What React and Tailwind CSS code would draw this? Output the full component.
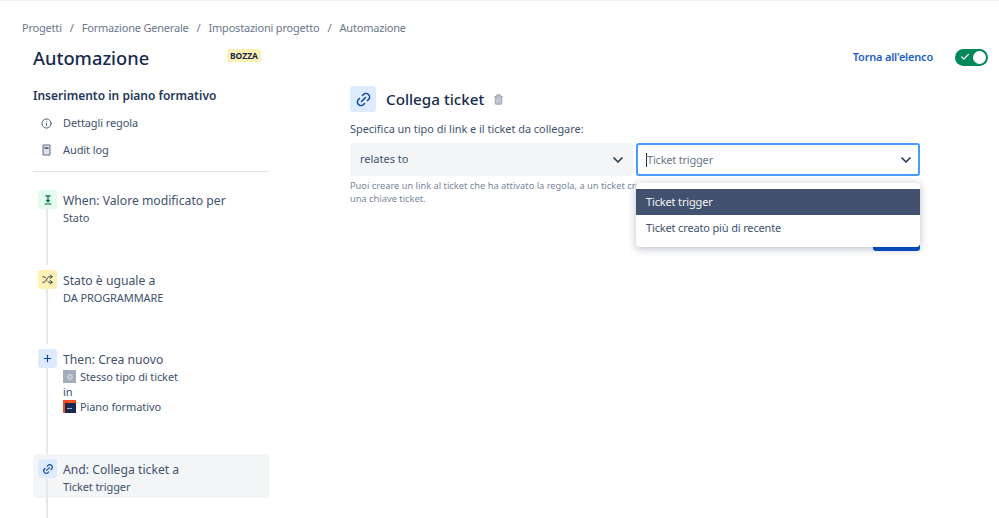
import { Info, Shuffle, Plus, Link2, ChevronDown, Check, Trash2 } from 'lucide-react';

const crumbs = ['Progetti', 'Formazione Generale', 'Impostazioni progetto', 'Automazione'];

function TicketIcon() {
  return (
    <span className="w-[13px] h-[13px] bg-[#a5adba] flex items-center justify-center shrink-0">
      <span className="w-[6px] h-[6px] rounded-full border-2 border-[#c8ced8]" />
    </span>
  );
}

function PlanIcon() {
  return (
    <span className="w-[13px] h-[13px] bg-[#ff4b22] flex items-end justify-end shrink-0">
      <span className="w-[11px] h-[10px] bg-[#172b4d] flex items-center pl-[2px]">
        <span className="w-[5px] h-[1px] bg-[#8fb4e0]" />
      </span>
    </span>
  );
}

function ValueIcon() {
  return (
    <svg width="10" height="10" viewBox="0 0 10 10" className="text-[#006644]" fill="none" stroke="currentColor" strokeWidth="1.2">
      <path d="M2.5 0.8h5M5 1v5.5M3.2 4.8 5 6.8l1.8-2M1.5 9h7" />
    </svg>
  );
}

function Step({ icon, tint, title, selected, height, children }) {
  return (
    <div className={`flex gap-[6px] pl-[5px] pr-2 rounded ${height} ${selected ? 'bg-[#f4f5f7]' : ''}`}>
      <div className="flex flex-col w-[19px] shrink-0">
        <div className={`w-[19px] h-[19px] mt-[5px] rounded-[3px] flex items-center justify-center shrink-0 ${tint}`}>{icon}</div>
        <div className="w-[2px] ml-[8px] flex-1 bg-[#e6e7ef]" />
      </div>
      <div className="pt-[6px] text-[#42526e]">
        <div className="text-[12.2px] leading-[19px]">{title}</div>
        <div className="text-[11px] tracking-[-0.1px] leading-[15px]">{children}</div>
      </div>
    </div>
  );
}

export default function App() {
  return (
    <div className="w-[999px] h-[518px] overflow-hidden bg-white border-t border-[#f1f2f4] font-['Noto_Sans','Open_Sans',sans-serif] text-[#42526e]">
      {/* Breadcrumbs */}
      <div className="flex gap-[8px] pl-[22px] pt-[19px] text-[11px] tracking-[-0.2px] leading-4 text-[#6b778c]">
        {crumbs.map((c, idx) => (
          <div key={c} className="flex gap-[8px]">
            {idx > 0 && <span>/</span>}
            <span>{c}</span>
          </div>
        ))}
      </div>

      {/* Header */}
      <div className="flex items-center justify-between pl-[33px] pr-[11px] mt-[7px] h-[30px]">
        <div className="flex items-start w-[228px] justify-between">
          <h1 className="text-[18.3px] leading-[30px] font-medium text-[#172b4d]">Automazione</h1>
          <span className="mt-[6px] px-[3px] h-[13px] leading-[13px] rounded-[2px] bg-[#fff0b3] text-[#172b4d] text-[8.5px] font-bold">BOZZA</span>
        </div>
        <div className="flex items-center gap-[22px] mb-[2px]">
          <a className="text-[11px] tracking-[-0.2px] font-semibold text-[#1d5fc9]">Torna all'elenco</a>
          <div className="w-[33px] h-[17px] rounded-full bg-[#00875a] flex items-center justify-between pl-[5px] pr-[2px]">
            <Check size={10} strokeWidth={3} className="text-white" />
            <span className="w-[13px] h-[13px] rounded-full bg-white" />
          </div>
        </div>
      </div>

      <div className="flex pl-[33px] mt-[13px]">
        {/* Sidebar */}
        <aside className="w-[236px] shrink-0">
          <h2 className="text-[12px] leading-5 font-semibold text-[#253858]">Inserimento in piano formativo</h2>
          <div className="pl-[8px] mt-[8px] text-[11px] tracking-[-0.1px]">
            <div className="flex items-center gap-[11px] h-[18px]">
              <Info size={11} strokeWidth={2} className="text-[#42526e] shrink-0" />
              <span>Dettagli regola</span>
            </div>
            <div className="flex items-center gap-[11px] h-[18px] mt-[9px]">
              <svg width="11" height="12" viewBox="0 0 11 12" className="shrink-0">
                <path d="M2 1h7v10H2z" fill="#dfe1e6" stroke="#5e6c84" />
                <path d="M3.5 3h4v2h-4z" fill="#5e6c84" />
              </svg>
              <span>Audit log</span>
            </div>
          </div>
          <div className="h-[1px] bg-[#e3e4ea] mt-[12px] mb-[13px]" />

          <Step
            height="h-[80px]"
            tint="bg-[#e3fcef]"
            icon={<ValueIcon />}
            title="When: Valore modificato per"
          >
            Stato
          </Step>
          <Step
            height="h-[79px]"
            tint="bg-[#fff0b3]"
            icon={<Shuffle size={11} strokeWidth={2} className="text-[#172b4d]" />}
            title="Stato è uguale a"
          >
            DA PROGRAMMARE
          </Step>
          <Step
            height="h-[110px]"
            tint="bg-[#deebff]"
            icon={<Plus size={11} strokeWidth={2.5} className="text-[#0747a6]" />}
            title="Then: Crea nuovo"
          >
            <div className="flex items-center gap-[4px]"><TicketIcon />Stesso tipo di ticket</div>
            <div>in</div>
            <div className="flex items-center gap-[4px]"><PlanIcon />Piano formativo</div>
          </Step>
          <Step
            selected
            height="h-[44px]"
            tint="bg-[#deebff]"
            icon={<Link2 size={12} strokeWidth={2.2} className="text-[#0747a6] -rotate-45" />}
            title="And: Collega ticket a"
          >
            Ticket trigger
          </Step>
          <div className="w-[2px] h-[30px] ml-[13px] bg-[#e6e7ef]" />
        </aside>

        {/* Detail panel */}
        <main className="w-[570px] ml-[81px]">
          <div className="flex items-center">
            <div className="w-[26px] h-[26px] rounded-[3px] bg-[#deebff] flex items-center justify-center">
              <Link2 size={17} strokeWidth={2.2} className="text-[#0747a6] -rotate-45" />
            </div>
            <h2 className="ml-[10px] text-[15.2px] font-medium text-[#172b4d]">Collega ticket</h2>
            <Trash2 size={11} strokeWidth={2.5} className="ml-[9px] text-[#a5adba]" fill="#c1c7d0" />
          </div>
          <p className="text-[10.9px] leading-4 mt-[9px]">Specifica un tipo di link e il ticket da collegare:</p>
          <div className="flex gap-[3px] mt-[6px]">
            <div className="w-[283px] h-[33px] rounded-[3px] bg-[#f4f5f7] flex items-center justify-between pl-[10px] pr-[7px] text-[11px]">
              <span>relates to</span>
              <ChevronDown size={16} strokeWidth={2.5} className="text-[#253858]" />
            </div>
            <div className="relative flex-1 min-w-0">
              <div className="h-[33px] rounded-[3px] border-2 border-[#4c9aff] bg-white flex items-center justify-between pl-[8px] pr-[4px] text-[11px] tracking-[-0.2px] text-[#6b778c]">
                <span className="border-l border-[#253858] leading-[14px]">Ticket trigger</span>
                <ChevronDown size={16} strokeWidth={2.5} className="text-[#253858]" />
              </div>
              {/* Open dropdown */}
              <div className="absolute z-10 top-[39px] left-0 right-0 h-[65px] rounded-[4px] bg-white border-t border-[#eceef1] shadow-[0_2px_8px_rgba(9,30,66,0.28)] pt-[6px] text-[11px] tracking-[-0.15px]">
                <div className="h-[26px] flex items-center pl-[10px] bg-[#42526e] text-[#f4f5f7]">Ticket trigger</div>
                <div className="h-[26px] flex items-center pl-[10px] text-[#42526e]">Ticket creato più di recente</div>
              </div>
            </div>
          </div>
          <p className="text-[9.3px] leading-[13px] mt-[3px] text-[#7a869a]">
            Puoi creare un link al ticket che ha attivato la regola, a un ticket creato più di recente o a<br />una chiave ticket.
          </p>
          <div className="flex justify-end mt-[21px]">
            <button className="w-[47px] h-[25px] rounded-[3px] bg-[#0052cc]" />
          </div>
        </main>
      </div>
    </div>
  );
}
